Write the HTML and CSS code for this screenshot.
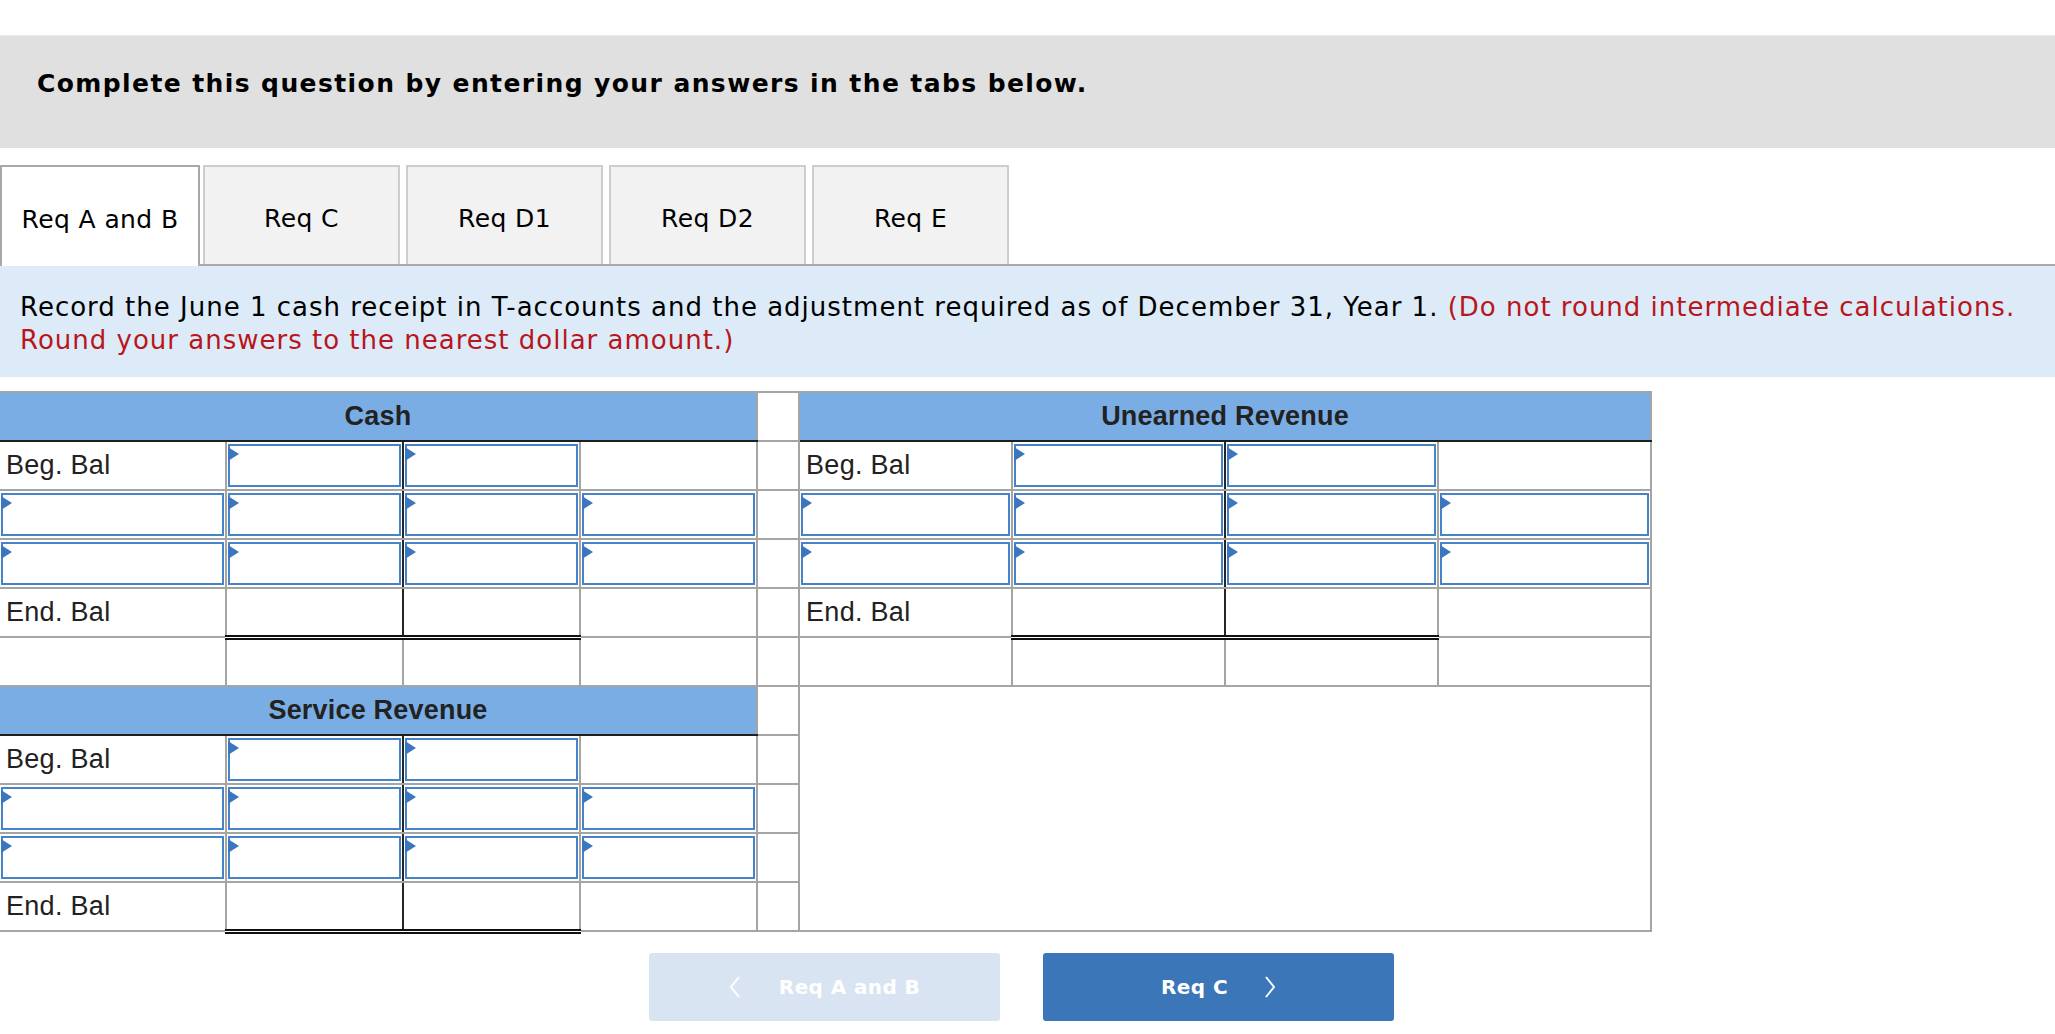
FILE: index.html
```html
<!DOCTYPE html>
<html lang="en">
<head>
<meta charset="utf-8">
<title>T-accounts</title>
<link rel="stylesheet" href="styles.css">
</head>
<body>
<div class="banner">Complete this question by entering your answers in the tabs below.</div>

<div class="tabs">
  <div class="tab active">Req A and B</div>
  <div class="tab">Req C</div>
  <div class="tab">Req D1</div>
  <div class="tab">Req D2</div>
  <div class="tab">Req E</div>
</div>

<div class="info">Record the June 1 cash receipt in T-accounts and the adjustment required as of December 31, Year 1. <span class="red">(Do not round intermediate calculations.<br>Round your answers to the nearest dollar amount.)</span></div>

<table class="ledger">
  <colgroup>
    <col class="w-lbl"><col class="w-amt"><col class="w-amt"><col class="w-amt">
    <col class="w-sp">
    <col class="w-r"><col class="w-r"><col class="w-r"><col class="w-r">
  </colgroup>
  <tbody>
    <tr>
      <td class="head" colspan="4">Cash</td>
      <td class="sp"></td>
      <td class="head" colspan="4">Unearned Revenue</td>
    </tr>
    <tr>
      <td class="lbl">Beg. Bal</td>
      <td class="mid"><div class="in"><input type="text"></div></td>
      <td><div class="in"><input type="text"></div></td>
      <td></td>
      <td class="sp"></td>
      <td class="lbl">Beg. Bal</td>
      <td class="mid"><div class="in"><input type="text"></div></td>
      <td><div class="in"><input type="text"></div></td>
      <td></td>
    </tr>
    <tr>
      <td><div class="in"><input type="text"></div></td>
      <td class="mid"><div class="in"><input type="text"></div></td>
      <td><div class="in"><input type="text"></div></td>
      <td><div class="in"><input type="text"></div></td>
      <td class="sp"></td>
      <td><div class="in"><input type="text"></div></td>
      <td class="mid"><div class="in"><input type="text"></div></td>
      <td><div class="in"><input type="text"></div></td>
      <td><div class="in"><input type="text"></div></td>
    </tr>
    <tr>
      <td><div class="in"><input type="text"></div></td>
      <td class="mid"><div class="in"><input type="text"></div></td>
      <td><div class="in"><input type="text"></div></td>
      <td><div class="in"><input type="text"></div></td>
      <td class="sp"></td>
      <td><div class="in"><input type="text"></div></td>
      <td class="mid"><div class="in"><input type="text"></div></td>
      <td><div class="in"><input type="text"></div></td>
      <td><div class="in"><input type="text"></div></td>
    </tr>
    <tr>
      <td class="lbl">End. Bal</td>
      <td class="mid tot"></td>
      <td class="tot"></td>
      <td></td>
      <td class="sp"></td>
      <td class="lbl">End. Bal</td>
      <td class="mid tot"></td>
      <td class="tot"></td>
      <td></td>
    </tr>
    <tr>
      <td></td><td></td><td></td><td></td>
      <td class="sp"></td>
      <td></td><td></td><td></td><td></td>
    </tr>
    <tr>
      <td class="head" colspan="4">Service Revenue</td>
      <td class="sp"></td>
      <td class="blank" colspan="4" rowspan="5"></td>
    </tr>
    <tr>
      <td class="lbl">Beg. Bal</td>
      <td class="mid"><div class="in"><input type="text"></div></td>
      <td><div class="in"><input type="text"></div></td>
      <td></td>
      <td class="sp"></td>
    </tr>
    <tr>
      <td><div class="in"><input type="text"></div></td>
      <td class="mid"><div class="in"><input type="text"></div></td>
      <td><div class="in"><input type="text"></div></td>
      <td><div class="in"><input type="text"></div></td>
      <td class="sp"></td>
    </tr>
    <tr>
      <td><div class="in"><input type="text"></div></td>
      <td class="mid"><div class="in"><input type="text"></div></td>
      <td><div class="in"><input type="text"></div></td>
      <td><div class="in"><input type="text"></div></td>
      <td class="sp"></td>
    </tr>
    <tr>
      <td class="lbl">End. Bal</td>
      <td class="mid tot"></td>
      <td class="tot"></td>
      <td></td>
      <td class="sp"></td>
    </tr>
  </tbody>
</table>

<div class="nav">
  <button class="btn prev" type="button">
    <svg class="chev" width="12" height="22" viewBox="0 0 12 22"><polyline points="10,1 2,11 10,21" fill="none" stroke="#fff" stroke-width="2"/></svg>
    <span>Req A and B</span>
  </button>
  <button class="btn next" type="button">
    <span>Req C</span>
    <svg class="chev" width="12" height="22" viewBox="0 0 12 22"><polyline points="2,1 10,11 2,21" fill="none" stroke="#fff" stroke-width="2"/></svg>
  </button>
</div>
</body>
</html>
```
FILE: styles.css
```css
body {
  margin: 0;
  background: #fff;
  font-family: "DejaVu Sans", Verdana, sans-serif;
  color: #000;
}

.banner {
  margin-top: 35px;
  height: 113px;
  box-sizing: border-box;
  background: #e0e0e0;
  border-top: 1px solid #ebebeb;
  padding: 34px 37px 0;
  font-size: 25px;
  line-height: 28px;
  letter-spacing: 1.4px;
  font-weight: bold;
}

.tabs {
  margin-top: 17px;
  height: 101px;
  box-sizing: border-box;
  display: flex;
  gap: 6px;
  border-bottom: 2px solid #a9a9a9;
}

.tab {
  width: 197px;
  box-sizing: border-box;
  border: 2px solid #cdcdcd;
  border-bottom: none;
  background: #f2f2f2;
  display: flex;
  align-items: center;
  justify-content: center;
  padding-top: 6px;
  font-size: 25px;
  letter-spacing: 0.4px;
}

.tab.active {
  width: 200px;
  margin-right: -3px;
  margin-bottom: -2px;
  background: #fff;
  border-color: #a9a9a9;
}

.info {
  height: 111px;
  box-sizing: border-box;
  background: #dcebf7;
  padding: 25px 20px 0;
  font-size: 26px;
  line-height: 33px;
  letter-spacing: 1px;
}

.red {
  color: #b9151c;
}

.ledger {
  margin-top: 14px;
  border-collapse: collapse;
  table-layout: fixed;
  width: 1652px;
  font-family: "Liberation Sans", Arial, sans-serif;
  color: #222;
}

.w-lbl { width: 226px; }
.w-amt { width: 177px; }
.w-sp { width: 42px; }
.w-r { width: 213px; }

.ledger tr {
  height: 49px;
}

.ledger td {
  border: 2px solid #a5a5a5;
  padding: 0;
  vertical-align: middle;
}

.ledger tr > td:first-child {
  border-left: none;
}

.ledger td.head {
  background: #7aade3;
  border-bottom: 2px solid #1e1e1e;
  text-align: center;
  font-weight: bold;
  font-size: 27px;
  letter-spacing: 0.2px;
}

.ledger td.lbl {
  padding-left: 6px;
  font-size: 27px;
  letter-spacing: 0.3px;
}

.ledger td.mid {
  border-right: 2px solid #262626;
}

.ledger td.tot {
  border-top: 2px solid #111;
  border-bottom: 5px double #111;
}

.in {
  position: relative;
  margin: 1px;
  height: 43px;
  box-sizing: border-box;
  border: 2px solid #4783c9;
  background: #fff;
}

.in::before {
  content: "";
  position: absolute;
  left: -2px;
  top: 1px;
  border-left: 11px solid #3a77c0;
  border-top: 7px solid transparent;
  border-bottom: 7px solid transparent;
}

.in input {
  display: block;
  width: 100%;
  height: 100%;
  box-sizing: border-box;
  border: none;
  padding: 0 6px;
  background: transparent;
  font: 24px "Liberation Sans", Arial, sans-serif;
  outline: none;
}

.nav {
  margin-top: 19px;
  display: flex;
  justify-content: center;
  gap: 43px;
  padding-right: 12px;
}

.btn {
  width: 351px;
  height: 68px;
  border: none;
  border-radius: 3px;
  color: #fff;
  font-family: "DejaVu Sans", Verdana, sans-serif;
  font-weight: bold;
  font-size: 20px;
  letter-spacing: 0.4px;
  display: flex;
  align-items: center;
  justify-content: center;
  padding: 0;
}

.btn.prev {
  background: #d8e4f2;
  gap: 38px;
}

.btn.next {
  background: #3a76b8;
  gap: 36px;
}

.chev {
  display: block;
}
```
